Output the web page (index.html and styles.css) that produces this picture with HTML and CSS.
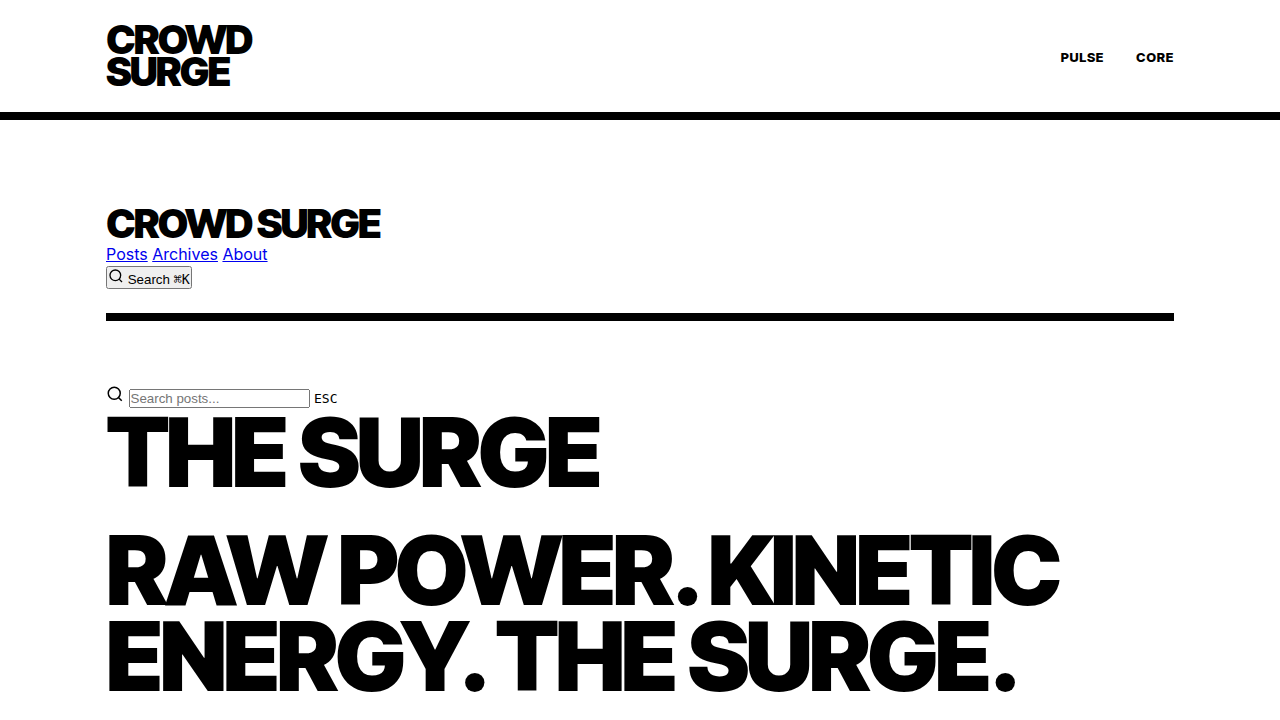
FILE: index.html
```html
<!DOCTYPE html>
<html lang="en">
<head>
  <meta charset="UTF-8">
  <meta name="viewport" content="width=device-width, initial-scale=1.0">
  <title>Crowd Surge</title>
  <link rel="stylesheet" href="styles.css">
</head>
<body>
  <header class="site-header">
    <div class="container header-inner">
      <a href="#home" class="logo">Crowd<br>Surge</a>
      <nav>
        <ul class="site-nav">
          <li><a href="#pulse">Pulse</a></li>
          <li><a href="#core">Core</a></li>
        </ul>
      </nav>
    </div>
  </header>

  <main class="container content">
    <header class="page-header">
      <a href="#home" class="logo">Crowd Surge</a>
      <nav>
        <a href="#posts">Posts</a>
        <a href="#archives">Archives</a>
        <a href="#about">About</a>
      </nav>
      <button type="button" aria-label="Search">
        <svg width="16" height="16" viewBox="0 0 24 24" fill="none" stroke="currentColor" stroke-width="2"><circle cx="11" cy="11" r="8"/><path d="m21 21-4.35-4.35"/></svg>
        <span>Search</span>
        <kbd>⌘K</kbd>
      </button>
    </header>

    <div class="search-box">
      <svg width="18" height="18" viewBox="0 0 24 24" fill="none" stroke="currentColor" stroke-width="2"><circle cx="11" cy="11" r="8"/><path d="m21 21-4.35-4.35"/></svg>
      <input type="text" placeholder="Search posts..." aria-label="Search posts">
      <kbd>ESC</kbd>
    </div>

    <h1>The Surge</h1>
    <h2>Raw power. Kinetic energy. The Surge.</h2>
  </main>
</body>
</html>
```
FILE: styles.css
```css
* {
  margin: 0;
  padding: 0;
  box-sizing: border-box;
}

body {
  background: #fff;
  color: #000;
  font-family: Inter, sans-serif;
  line-height: 1.4;
}

.container {
  max-width: 1100px;
  margin: 0 auto;
  padding: 0 16px;
}

.site-header {
  padding: 24px 0;
  border-bottom: 8px solid #000;
}

.header-inner {
  display: flex;
  justify-content: space-between;
  align-items: center;
}

.logo {
  color: #000;
  font-family: "Inter Tight", "Inter Display", Inter, sans-serif;
  font-size: 40px;
  font-weight: 900;
  line-height: 32px;
  letter-spacing: -0.05em;
  text-decoration: none;
  text-transform: uppercase;
}

.site-nav {
  display: flex;
  gap: 32px;
  list-style: none;
}

.site-nav a {
  color: #000;
  font-family: "Inter Tight", "Inter Display", Inter, sans-serif;
  font-size: 13px;
  font-weight: 800;
  letter-spacing: 0.05em;
  text-decoration: none;
  text-transform: uppercase;
}

.content {
  padding-top: 64px;
  padding-bottom: 64px;
}

.page-header {
  margin-bottom: 64px;
  padding: 24px 0;
  border-bottom: 8px solid #000;
}

h1,
h2 {
  font-family: "Inter Tight", "Inter Display", Inter, sans-serif;
  font-size: 96px;
  font-weight: 900;
  line-height: 86px;
  letter-spacing: -0.04em;
  text-transform: uppercase;
}

h1 {
  margin-bottom: 32px;
}
```
